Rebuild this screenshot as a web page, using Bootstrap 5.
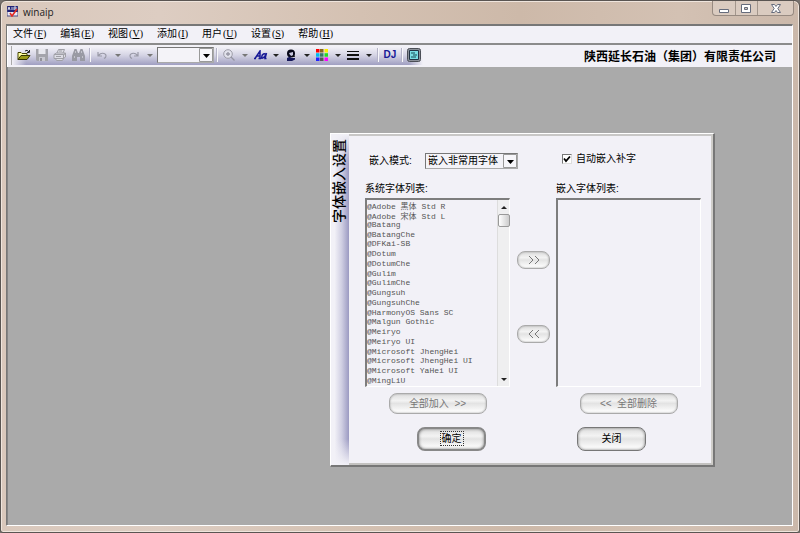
<!DOCTYPE html>
<html lang="zh-CN">
<head>
<meta charset="utf-8">
<meta name="viewport" content="width=device-width, initial-scale=1">
<title>winaip</title>
<link rel="stylesheet" href="https://cdn.jsdelivr.net/npm/bootstrap@5.3.0/dist/css/bootstrap.min.css">
<style>
:root{--face:#f2f1f7;--ui:"Liberation Sans","Noto Sans CJK SC",sans-serif;--fixed:"Liberation Mono","Noto Sans CJK SC",monospace}
body{font-family:var(--ui);font-size:10px;line-height:12px;color:#000;background:#77716d}
button,select,input{font:inherit;color:inherit}
svg{display:block}
.win-frame{min-height:100vh;padding:0 6px 6px 5px;border:1px solid #5a5552;border-radius:6px 6px 3px 3px;
 background:linear-gradient(90deg,#d9c8bc 0,#ddcdc2 20%,#d4c1b2 45%,#cdb9a9 65%,#d3c1b3 85%,#cbb8aa);box-shadow:inset 0 0 0 1px #efe5dd}
.win-title{height:23px;padding-left:1px;font-family:"Open Sans","Noto Sans",sans-serif}
.win-title h1{font-size:10px;line-height:14px;margin:1px 0 0 5px;color:#222}
.win-ctl{height:15px;margin-right:-1px;border:1px solid #978a81;border-top:0;border-radius:0 0 4px 4px;background:#dacbc0}
.win-ctl button{border:0;background:none;padding:0;width:22px;display:flex;align-items:center;justify-content:center}
.win-ctl button+button{border-left:1px solid #a3968c}
.win-ctl button:last-child{width:36px}
.win-body{border:1px solid #777;border-top-width:2px;border-right-color:#fff;border-bottom-color:#fff;background:#aaa}
.menu-strip{height:17px;padding:0 0 1px 5px;gap:14px;background:var(--face);border-left:1px solid #fff}
.menu-strip a{color:#000;text-decoration:none;white-space:nowrap}
.menu-strip span{font-family:"Liberation Serif",serif;margin-left:1px}
.tool-strip{height:24px;padding:0 0 2px 3px;border-top:2px solid #8b8b8b;background:var(--face);border-left:1px solid #fff}
.tool-grip{width:1px;height:19px;background:#aaa}
.tool-set{height:20px;padding-left:3px;background:linear-gradient(90deg,var(--face),transparent 14px,transparent calc(100% - 14px),var(--face)),linear-gradient(#f2f1f7 10%,#d6d5e5 50%,#a09fc2)}
.tool-set button{width:18px;height:18px;border:0;padding:0;background:none;display:flex;align-items:center;justify-content:center}
.tool-set button.drop{width:14px}
.tool-set .zoom-pick~button.drop{width:13px}
.tool-set button.drop::after{content:"";border:3px solid transparent;border-top-color:#222;border-bottom:0}
.tool-set button.drop.dim::after{border-top-color:#777}
.tool-set button.text-tool{color:#171996}
.tool-sep{width:6px;height:14px;background:linear-gradient(90deg,transparent 2px,#b5b4c8 2px,#b5b4c8 3px,#f8f8fb 3px,#f8f8fb 4px,transparent 4px)}
.pick{appearance:none;border:1px solid #777;border-right-color:#aaa;border-bottom-color:#aaa;border-radius:0;outline:0;padding:0 14px 0 2px;
 background:#f4f3f8 url("data:image/svg+xml,%3Csvg xmlns='http://www.w3.org/2000/svg' width='14' height='14'%3E%3Cpath d='M.5.5h13v13H.5z' fill='%23f7f6fa' stroke='%23999'/%3E%3Cpath d='M4 6h7l-3.500 4z'/%3E%3C/svg%3E") no-repeat right center}
.zoom-pick{width:57px;height:16px}
.company{font-size:12px;line-height:16px;padding:3px 16px 0 0}
.desk{min-height:300px;border-left:1px solid #858585}
.dlg{position:absolute;left:322px;top:66px;width:385px;border:1px solid #fff;border-right:2px solid #777;border-bottom:2px solid #777;background:var(--face)}
.dlg-side{width:19px;padding-top:5px;background:linear-gradient(180deg,var(--face),transparent 30px,transparent calc(100% - 26px),var(--face)),linear-gradient(90deg,#f2f1f7 20%,#cfcee2 60%,#9b9ac2)}
.dlg-side h2{writing-mode:vertical-rl;text-orientation:sideways;transform:rotate(180deg);font-size:14px;line-height:16px;font-weight:500;margin:0}
.dlg-main{padding:17px 10px 12px 16px;border-top:2px solid #c8c7c6;border-right:2px solid #cfcdc9;border-bottom:2px solid #c3c2c0}
.mode-row{height:16px;padding-left:4px}
.mode-row .mode-label{width:56px}
.mode-pick{width:93px;height:16px}
.auto-fill{margin-left:44px;gap:4px;padding-bottom:4px}
.auto-fill input{appearance:none;width:10px;height:10px;margin:0;border:1px solid #777;border-right-color:#ddd;border-bottom-color:#ddd;background:#fff}
.auto-fill input:checked{background:#fff url("data:image/svg+xml,%3Csvg xmlns='http://www.w3.org/2000/svg' viewBox='0 0 8 8'%3E%3Cpath d='M1 3.500L3 6l4-4.500' fill='none' stroke='%23000' stroke-width='1.800'/%3E%3C/svg%3E")}
.lists{margin-top:14px}
.list-col{width:145px}
.list-col label{line-height:12px;margin-bottom:3px}
.list-frame{height:189px;border:2px solid #7d7d7d;border-right:1px solid #fff;border-bottom:1px solid #fff}
.list-frame select{appearance:none;border:0;border-radius:0;padding:0;margin:0;height:100%;background:var(--face);outline:0;overflow:hidden;font-family:var(--fixed);font-size:8px;scrollbar-width:none;opacity:1}
.list-frame option{display:block;padding:0;min-height:0;height:10px;color:#555}
.list-frame option:nth-child(4n){height:9px}
.bar{width:12px;background:#efeff0;border-left:1px solid #ddd}
.bar i{height:14px;width:100%;display:flex;align-items:center;justify-content:center}
.bar i::after{content:"";border:3px solid transparent;border-top-color:#222;border-bottom:0}
.bar i.up::after{border-top:0;border-bottom:3px solid #222}
.bar b{height:13px;width:12px;border:1px solid #999;border-radius:2px;background:linear-gradient(90deg,#fff,#ccc)}
.list-col .all-row{height:22px;margin-top:6px}
.move-col{width:46px;padding:68px 0 0 7px}
.pill{border:1px solid #9c9c9c;padding:0;border-radius:8px;background:linear-gradient(#ddd,#f3f3f3 35%,#e3e3e3 50%,#fbfbfb 90%);box-shadow:inset 0 0 2px #999;color:#000}
.pill:disabled{color:#777;opacity:1;border-color:#aaa}
.pill-all{width:98px;height:21px;white-space:pre}
.pill-move{width:33px;height:18px;display:flex;align-items:center;justify-content:center}
.pill-end{width:69px;height:24px;border-color:#777;box-shadow:inset 0 0 3px #777}
.pill-end.main-btn{border-width:2px;border-color:#888}
.main-btn span{outline:1px dotted #333;outline-offset:1px}
.end-row{margin-top:12px;padding-left:52px;gap:91px}
</style>
<script src="https://cdn.jsdelivr.net/npm/bootstrap@5.3.0/dist/js/bootstrap.bundle.min.js"></script>
</head>
<body>
<div class="win-frame d-flex flex-column">
 <header class="win-title d-flex align-items-start">
  <svg class="mt-1" width="11" height="12" viewBox="0 0 11 12"><path d="M0 1h11v10H0z" fill="#e9e9f5"/><path d="M0 1h11v6H0z" fill="#202277"/><path d="M1 5l1-3 1 3M5 2v3M7 5V2h2v2H7" fill="none" stroke="#fff" stroke-width=".8"/><path d="M0 1v10h11V1" fill="none" stroke="#4a4a80"/><path d="M3 8l2 3 5-7" fill="none" stroke="#e22a22" stroke-width="1.600"/></svg>
  <h1 class="fw-normal mt-1">winaip</h1>
  <div class="win-ctl d-flex ms-auto">
   <button aria-label="最小化"><svg width="11" height="9"><path d="M.5 5.500h9v3h-9z" fill="#fff" stroke="#666c7c"/></svg></button>
   <button aria-label="最大化"><svg width="11" height="9"><path d="M.5.500h9v8h-9z" fill="#fff" stroke="#666c7c"/><path d="M3.500 3.500h3v2h-3z" fill="#d5c6bb" stroke="#666c7c"/></svg></button>
   <button aria-label="关闭窗口"><svg width="10" height="9" viewBox="0 0 10 9"><path d="M.5.500h3L5 2.500 6.500.500h3L6.800 4.500l2.700 4h-3L5 6.500l-1.500 2h-3l2.700-4z" fill="#fff" stroke="#666c7c"/></svg></button>
  </div>
 </header>
 <div class="win-body flex-fill d-flex flex-column">
  <nav class="menu-strip d-flex align-items-center">
   <a href="#">文件<span>(<u>F</u>)</span></a><a href="#">编辑<span>(<u>E</u>)</span></a><a href="#">视图<span>(<u>V</u>)</span></a><a href="#">添加<span>(<u>I</u>)</span></a><a href="#">用户<span>(<u>U</u>)</span></a><a href="#">设置<span>(<u>S</u>)</span></a><a href="#">帮助<span>(<u>H</u>)</span></a>
  </nav>
  <div class="tool-strip d-flex align-items-center">
   <div class="tool-grip"></div>
   <div class="tool-set d-flex align-items-center">
    <button aria-label="打开"><svg width="14" height="12" viewBox="0 0 14 12"><path d="M1 10.500v-7h3l1 1h5v2" fill="#ffffa0" stroke="#444400"/><path d="M1 10.500l3-4h9l-3 4z" fill="#999a19" stroke="#333300"/><path d="M8 2q2-2 4 1M12.500 1v2.500H10" fill="none" stroke="#222"/></svg></button>
    <button aria-label="保存"><svg width="12" height="12" viewBox="0 0 12 12"><path d="M0 0h12v12H1l-1-1z" fill="#a4a4ab"/><path d="M2.500 0h7v5h-7z" fill="#e8e8ee"/><path d="M3 8h6v4H3z" fill="#c8c8d0"/><path d="M4 9h2v3H4z" fill="#92929a"/></svg></button>
    <button aria-label="打印"><svg width="14" height="12" viewBox="0 0 14 12"><path d="M4 4l1.500-3.500h6L10 4M1 5.500L3.500 4h9l-2 2M1 5.500h9.500v4H1zM10.500 6l2-2v4l-2 1.500M2.500 9.500l1 2h6l1-2" fill="#dddde5" stroke="#a0a0a7"/><path d="M6 2h3M3 7.500h5" stroke="#a0a0a7"/></svg></button>
    <button aria-label="查找"><svg width="13" height="12" viewBox="0 0 13 12"><path d="M2.500 0h2l1.500 4h1l1.500-4h2L13 7v5H8V8H5v4H0V7z" fill="#999aa4"/><path d="M2 8h1M10 8h1M3 3h1M9 3h1" stroke="#ececf3"/></svg></button>
    <span class="tool-sep"></span>
    <button aria-label="撤销"><svg width="10" height="9" viewBox="0 0 10 9"><path d="M1 1v4h4M1.500 4.500Q4 1.500 7 2.500t1.500 4L7 7.500" fill="none" stroke="#9999a7" stroke-width="1.200"/></svg></button><button class="drop dim" aria-label="撤销列表"></button>
    <button aria-label="重做"><svg width="10" height="9" viewBox="0 0 10 9"><path d="M9 1v4H5M8.500 4.500Q6 1.500 3 2.500t-1.500 4L3 7.500" fill="none" stroke="#9999a7" stroke-width="1.200"/></svg></button><button class="drop dim" aria-label="重做列表"></button>
    <select class="pick zoom-pick" aria-label="显示比例"><option></option></select>
    <span class="tool-sep"></span>
    <button aria-label="放大"><svg width="12" height="12" viewBox="0 0 12 12"><circle cx="5" cy="5" r="4.300" fill="#e2e2ec" stroke="#9d9da8"/><path d="M5 3v4M3 5h4M8 8l3.500 3.500" stroke="#9595a2" stroke-width="1.300"/></svg></button><button class="drop dim" aria-label="放大选项"></button>
    <button aria-label="文字"><svg width="15" height="10" viewBox="0 0 15 10"><path d="M1 8.500h2M2 8.500L7 1v7.500M5.500 8.500H8M4 6h3M13.500 3l-1.500 5.500h1.500M12.500 5.500Q10 8.800 8.700 8 8.500 5 10.500 4T12.500 5.500" fill="none" stroke="#171996" stroke-width="1.500"/></svg></button><button class="drop" aria-label="文字选项"></button>
    <button aria-label="用户"><svg width="12" height="12" viewBox="0 0 12 12"><circle cx="6" cy="4.500" r="4" fill="#080818"/><path d="M4 4l4-1v3L6.500 7 5 6z" fill="#c8c8df"/><path d="M2 12V9l3-1.500L6 9h4v1.500L7 12z" fill="#151759"/><path d="M7 8l2-2 1 2z" fill="#111"/></svg></button><button class="drop" aria-label="用户选项"></button>
    <button aria-label="颜色"><svg width="12" height="12" viewBox="0 0 12 12"><path d="M0 0h3.500v3.500H0z" fill="#f00"/><path d="M4 0h3.500v3.500H4z" fill="#886622"/><path d="M8.500 0H12v3.500H8.500z" fill="#ffee00"/><path d="M0 4.200h3.500v3.500H0z" fill="#0be"/><path d="M4 4.200h3.500v3.500H4z" fill="#377768"/><path d="M8.500 4.200H12v3.500H8.500z" fill="#2d2"/><path d="M0 8.500h3.500V12H0z" fill="#22f"/><path d="M4 8.500h3.500V12H4z" fill="#555"/><path d="M8.500 8.500H12V12H8.500z" fill="#f0f"/></svg></button><button class="drop" aria-label="颜色选项"></button>
    <button aria-label="线宽"><svg width="12" height="10"><path d="M0 1.500h12" stroke="#111"/><path d="M0 5h12" stroke="#111" stroke-width="2"/><path d="M0 9h12" stroke="#111" stroke-width="2"/></svg></button><button class="drop" aria-label="线宽选项"></button>
    <span class="tool-sep"></span>
    <button class="text-tool fw-bold">DJ</button>
    <span class="tool-sep"></span>
    <button aria-label="显示"><svg width="14" height="14" viewBox="0 0 14 14"><rect x=".5" y=".5" width="13" height="13" rx="2" fill="#8b9099" stroke="#4b4e56"/><path d="M2.500 2.500h9v9h-9z" fill="#78dce2" stroke="#234"/><path d="M4 5h4M6 7h4M4 9h5" stroke="#174a55"/></svg></button>
   </div>
   <strong class="company ms-auto text-nowrap">陕西延长石油（集团）有限责任公司</strong>
  </div>
  <main class="desk flex-fill position-relative">
   <section class="dlg d-flex" role="dialog" aria-labelledby="dlgTitle">
    <div class="dlg-side"><h2 id="dlgTitle">字体嵌入设置</h2></div>
    <form class="dlg-main flex-fill">
     <div class="mode-row d-flex align-items-center">
      <label class="mode-label" for="mode">嵌入模式:</label>
      <select id="mode" class="pick mode-pick"><option>嵌入非常用字体</option></select>
      <div class="auto-fill d-flex align-items-center"><input id="auto" type="checkbox" checked><label for="auto">自动嵌入补字</label></div>
     </div>
     <div class="lists d-flex">
      <div class="list-col">
       <label for="sys" class="d-block">系统字体列表:</label>
       <div class="list-frame d-flex">
        <select id="sys" class="flex-fill" size="19" disabled>
         <option>@Adobe 黑体 Std R</option><option>@Adobe 宋体 Std L</option><option>@Batang</option><option>@BatangChe</option><option>@DFKai-SB</option><option>@Dotum</option><option>@DotumChe</option><option>@Gulim</option><option>@GulimChe</option><option>@Gungsuh</option><option>@GungsuhChe</option><option>@HarmonyOS Sans SC</option><option>@Malgun Gothic</option><option>@Meiryo</option><option>@Meiryo UI</option><option>@Microsoft JhengHei</option><option>@Microsoft JhengHei UI</option><option>@Microsoft YaHei UI</option><option>@MingLiU</option>
        </select>
        <div class="bar d-flex flex-column" aria-hidden="true"><i class="up"></i><b></b><i class="mt-auto"></i></div>
       </div>
       <div class="all-row d-flex justify-content-center"><button type="button" class="pill pill-all" disabled>全部加入  &gt;&gt;</button></div>
      </div>
      <div class="move-col d-flex flex-column gap-5">
       <button type="button" class="pill pill-move mb-2" aria-label="加入" disabled><svg width="12" height="8"><path d="M1 0l4 4-4 4M7 0l4 4-4 4" fill="none" stroke="#777"/></svg></button>
       <button type="button" class="pill pill-move" aria-label="移除" disabled><svg width="12" height="8"><path d="M5 0L1 4l4 4M11 0L7 4l4 4" fill="none" stroke="#777"/></svg></button>
      </div>
      <div class="list-col">
       <label for="emb" class="d-block">嵌入字体列表:</label>
       <div class="list-frame d-flex"><select id="emb" class="flex-fill" size="19"></select></div>
       <div class="all-row d-flex justify-content-center"><button type="button" class="pill pill-all" disabled>&lt;&lt;  全部删除</button></div>
      </div>
     </div>
     <div class="end-row d-flex">
      <button type="button" class="pill pill-end main-btn"><span>确定</span></button>
      <button type="button" class="pill pill-end">关闭</button>
     </div>
    </form>
   </section>
  </main>
 </div>
</div>
</body>
</html>
